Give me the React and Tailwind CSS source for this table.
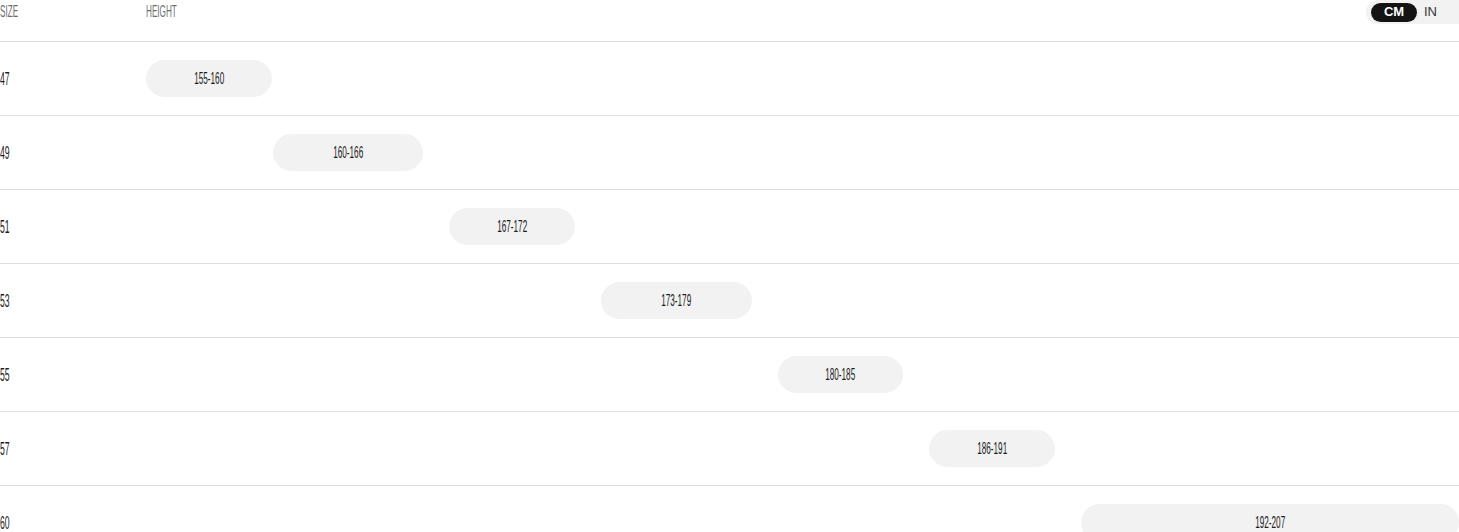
const rows = [
  { size: "47", range: "155-160", left: 0, width: 126 },
  { size: "49", range: "160-166", left: 127, width: 150 },
  { size: "51", range: "167-172", left: 303, width: 126 },
  { size: "53", range: "173-179", left: 455, width: 151 },
  { size: "55", range: "180-185", left: 632, width: 125 },
  { size: "57", range: "186-191", left: 783, width: 126 },
  { size: "60", range: "192-207", left: 935, width: 378 },
];

function Narrow({ children, className = "", origin = "origin-left" }) {
  return (
    <span
      className={`inline-block scale-x-[0.48] ${origin} whitespace-nowrap ${className}`}
    >
      {children}
    </span>
  );
}

export default function App() {
  return (
    <div
      className="w-full bg-white overflow-hidden"
      style={{ fontFamily: '"Liberation Sans", Arial, sans-serif' }}
    >
      <div className="flex items-start h-[42px] border-b border-[#dedede]">
        <div className="w-[146px] pt-[1px] text-[17px] leading-[21px] text-[#6e6e6e]">
          <Narrow>SIZE</Narrow>
        </div>
        <div className="flex-1 pt-[1px] text-[17px] leading-[21px] text-[#6e6e6e]">
          <Narrow>HEIGHT</Narrow>
        </div>
        <div className="flex items-center h-[24px] w-[93px] rounded-l-full bg-[#f2f2f2]">
          <div className="ml-[5px] flex h-[19px] w-[46px] items-center justify-center rounded-full bg-[#141414] text-[13px] font-bold text-white">
            CM
          </div>
          <div className="ml-[7px] text-[13px] text-[#333]">IN</div>
        </div>
      </div>
      {rows.map((r) => (
        <div
          key={r.size}
          className="flex items-center h-[74px] border-b border-[#dedede]"
        >
          <div className="w-[146px] shrink-0 text-[18px] leading-[20px] text-[#1c1c1c]">
            <Narrow>{r.size}</Narrow>
          </div>
          <div className="flex-1 flex">
            <div
              className="flex h-[37px] shrink-0 items-center justify-center rounded-full bg-[#f2f2f2] text-[17px] text-[#1c1c1c]"
              style={{ marginLeft: r.left, width: r.width }}
            >
              <Narrow origin="origin-center">{r.range}</Narrow>
            </div>
          </div>
        </div>
      ))}
    </div>
  );
}
